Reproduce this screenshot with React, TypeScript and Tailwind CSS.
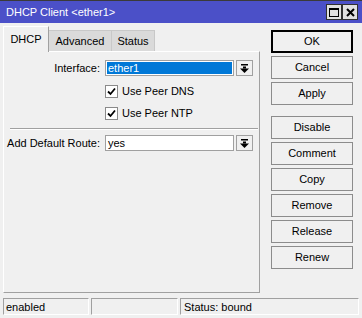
import React from "react";

const font = { fontFamily: '"Liberation Sans", Arial, sans-serif' };

function DropArrow() {
  return (
    <svg width="9" height="9" viewBox="0 0 9 9">
      <rect x="1" y="0" width="7" height="1.5" fill="#000" />
      <rect x="3" y="2.5" width="3" height="2" fill="#000" />
      <polygon points="0,4.5 9,4.5 4.5,9" fill="#000" />
    </svg>
  );
}

function Check() {
  return (
    <div className="w-[13px] h-[13px] border border-[#8a8a8a] bg-white flex items-center justify-center">
      <svg width="9" height="9" viewBox="0 0 9 9">
        <path d="M1 4.5 L3.5 7 L8 1.5" stroke="#000" strokeWidth="1.8" fill="none" />
      </svg>
    </div>
  );
}

function DropButton() {
  return (
    <div className="w-[17px] h-[16px] border border-[#a0a0a0] bg-[#f0f0f0] flex items-center justify-center">
      <DropArrow />
    </div>
  );
}

function Btn({ label, primary }: { label: string; primary?: boolean }) {
  return (
    <div
      className={`h-[23px] flex items-center justify-center text-[11px] text-black bg-[#f0f0f0] ${
        primary ? "border-2 border-black" : "border border-[#8c8c8c]"
      }`}
    >
      {label}
    </div>
  );
}

export default function App() {
  return (
    <div style={font} className="w-[362px] h-[318px] bg-[#f0f0f0] flex flex-col text-[11px] text-black overflow-hidden">
      {/* title bar */}
      <div className="h-[23px] bg-[#4b50c8] border-t border-[#3a3a3a] flex items-center pl-[6px] pr-[4px]">
        <span className="text-white text-[11px] flex-1">DHCP Client &lt;ether1&gt;</span>
        <div className="flex">
          <div className="w-[16px] h-[16px] bg-[#e0e0e0] border border-[#303030] flex items-center justify-center">
            <div className="w-[10px] h-[9px] border border-black border-t-2" />
          </div>
          <div className="w-[16px] h-[16px] bg-[#e0e0e0] border border-[#303030] flex items-center justify-center">
            <svg width="9" height="9" viewBox="0 0 9 9">
              <path d="M1 1 L8 8 M8 1 L1 8" stroke="#000" strokeWidth="2" />
            </svg>
          </div>
        </div>
      </div>

      <div className="flex flex-1 pl-[3px] pt-[3px]">
        {/* left tab area */}
        <div className="w-[257px] flex flex-col">
          <div className="flex items-end h-[25px] relative z-10">
            <div className="h-[26px] w-[46px] bg-[#f0f0f0] border-t border-l border-white border-r border-r-[#a0a0a0] flex items-center justify-center text-[11px] -mb-[1px] pb-[1px]">
              DHCP
            </div>
            <div className="h-[21px] w-[63px] bg-[#dadada] border-t border-r border-[#c8c8c8] flex items-center justify-center text-[11px]">
              Advanced
            </div>
            <div className="h-[21px] w-[43px] bg-[#dadada] border-t border-r border-[#c8c8c8] flex items-center justify-center text-[11px]">
              Status
            </div>
          </div>
          <div className="h-[242px] border-t border-l border-white border-r border-b border-r-[#a0a0a0] border-b-[#a0a0a0] flex flex-col pt-[8px]">
            <div className="flex items-center h-[16px]">
              <div className="w-[97px] text-right pr-[1px]">Interface:</div>
              <div className="ml-[4px] w-[129px] h-[16px] border border-[#a0a0a0] bg-white p-[1px]">
                <div className="h-full bg-[#0078d7] text-white leading-[12px] pl-[1px]">ether1</div>
              </div>
              <div className="ml-[2px]">
                <DropButton />
              </div>
            </div>
            <div className="flex items-center h-[13px] mt-[9px] ml-[101px] gap-[4px]">
              <Check />
              <span>Use Peer DNS</span>
            </div>
            <div className="flex items-center h-[13px] mt-[9px] ml-[101px] gap-[4px]">
              <Check />
              <span>Use Peer NTP</span>
            </div>
            <div className="mt-[8px] ml-[6px] mr-[1px] h-[2px] border-t border-[#a0a0a0] border-b border-b-white" />
            <div className="flex items-center h-[16px] mt-[5px]">
              <div className="w-[97px] text-right pr-[1px]">Add Default Route:</div>
              <div className="ml-[4px] w-[129px] h-[16px] border border-[#a0a0a0] bg-white pl-[2px] leading-[14px]">
                yes
              </div>
              <div className="ml-[2px]">
                <DropButton />
              </div>
            </div>
          </div>
        </div>

        {/* buttons */}
        <div className="ml-[11px] w-[82px] flex flex-col gap-[3px] pt-[4px]">
          <Btn label="OK" primary />
          <Btn label="Cancel" />
          <Btn label="Apply" />
          <div className="h-[5px]" />
          <Btn label="Disable" />
          <Btn label="Comment" />
          <Btn label="Copy" />
          <Btn label="Remove" />
          <Btn label="Release" />
          <Btn label="Renew" />
        </div>
      </div>

      {/* status bar */}
      <div className="h-[22px] flex gap-[2px] px-[3px] pt-[2px] pb-[3px]">
        <div className="w-[86px] border border-[#a0a0a0] border-r-white border-b-white pl-[2px] leading-[16px]">enabled</div>
        <div className="w-[87px] border border-[#a0a0a0] border-r-white border-b-white" />
        <div className="flex-1 border border-[#a0a0a0] border-r-white border-b-white pl-[3px] leading-[16px]">Status: bound</div>
      </div>
    </div>
  );
}
